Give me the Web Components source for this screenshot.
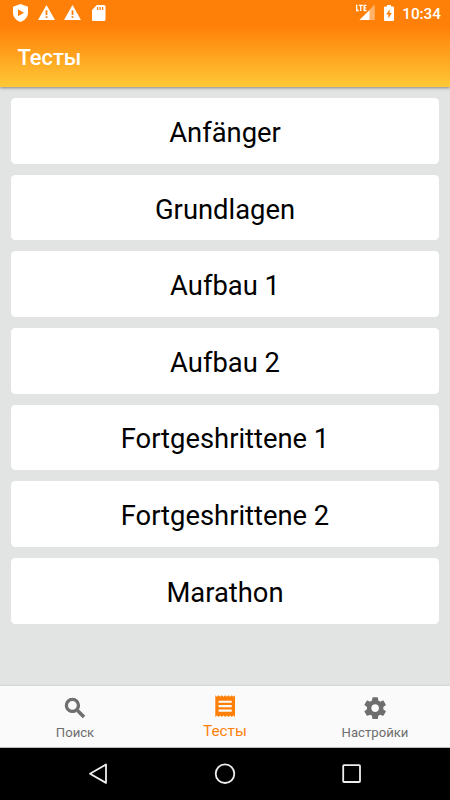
<!DOCTYPE html>
<html lang="ru">
<head>
<meta charset="utf-8">
<title>Тесты</title>
<style>
  html, body { margin: 0; height: 100%; }
  body {
    --dp: 1.09489px;
    font-family: Roboto, "Noto Sans", sans-serif;
    background: #e2e4e3;
    overflow: hidden;
  }
</style>
</head>
<body>
<app-screen>
  <status-bar slot="header" time="10:34"></status-bar>
  <title-bar slot="header">Тесты</title-bar>
  <test-card>Anfänger</test-card>
  <test-card>Grundlagen</test-card>
  <test-card>Aufbau 1</test-card>
  <test-card>Aufbau 2</test-card>
  <test-card>Fortgeshrittene 1</test-card>
  <test-card>Fortgeshrittene 2</test-card>
  <test-card>Marathon</test-card>
  <tab-bar slot="footer">
    <tab-item icon="search">Поиск</tab-item>
    <tab-item icon="receipt" active>Тесты</tab-item>
    <tab-item icon="settings">Настройки</tab-item>
  </tab-bar>
  <system-nav slot="footer"></system-nav>
</app-screen>

<script>
// AppScreen - header on top, scrolling list, footer at the bottom
class AppScreen extends HTMLElement {
  constructor() {
    super();
    this.attachShadow({ mode: 'open' }).innerHTML = `
      <style>
        :host { display: flex; flex-direction: column; height: 800px; }
        header {
          flex: none;
          position: relative;
          background: linear-gradient(#ff8008 calc(24 * var(--dp)), #ffc837);
          box-shadow: 0 1px 3px rgba(0, 0, 0, .42);
        }
        main {
          flex: 1;
          min-height: 0;
          display: flex;
          flex-direction: column;
          gap: calc(10 * var(--dp));
          padding: calc(10 * var(--dp));
        }
        footer { flex: none; }
      </style>
      <header><slot name="header"></slot></header>
      <main><slot></slot></main>
      <footer><slot name="footer"></slot></footer>`;
  }
}

// StatusBar - notification icons on the left, signal, battery and clock on the right
class StatusBar extends HTMLElement {
  constructor() {
    super();
    const warning = `
      <svg class="warning" width="17" height="15" viewBox="0 0 17 15">
        <path fill-rule="evenodd" d="M8.5 0 17 15H0zM7.600 5.200v4.800h1.800V5.200zM7.600 11.200v1.800h1.800v-1.800z"/>
      </svg>`;
    this.attachShadow({ mode: 'open' }).innerHTML = `
      <style>
        :host {
          display: flex;
          align-items: center;
          box-sizing: border-box;
          height: calc(24 * var(--dp) - .3px);
          padding: 0 9px 0 12.5px;
          color: #fff;
        }
        svg { display: block; fill: currentColor; flex: none; }
        .warning { margin-left: 9.5px; }
        .shield + .warning { margin-left: 10px; }
        .sd { margin-left: 11px; }
        .signal { margin-left: auto; }
        .battery { margin-left: 9px; }
        time { margin-left: 8px; font-size: 15.3px; font-weight: 500; line-height: 26px; padding-top: 2px; }
      </style>
      <svg class="shield" width="15" height="18" viewBox="0 0 15 18">
        <path fill-rule="evenodd" d="M7.5 0 15 2.800v6c0 4.200-3 7.700-7.500 9.200C3 16.500 0 13 0 8.800v-6zM5 5.200v7l6-3.500z"/>
      </svg>
      ${warning}
      ${warning}
      <svg class="sd" width="13.5" height="16" viewBox="0 0 13.5 16">
        <path fill-rule="evenodd" d="M4.900 0H12q1.500 0 1.500 1.500v13q0 1.500-1.500 1.500H1.500Q0 16 0 14.500V5zM5 2v3h1.300V2zM7.500 2v3h1.300V2zM10 2v3h1.300V2z"/>
      </svg>
      <svg class="signal" width="20" height="17" viewBox="0 0 20 17">
        <path d="M19.800.500V16H4.500z" opacity=".4"/>
        <path d="M14.500 6.300V16h-10z"/>
        <path fill="none" stroke="currentColor" stroke-width="1.300" d="M1.700.8v5.700h2.100M3.800 1.400h4M5.800 1v6M11.400 1.400H9.200v5.100h2.300M9.200 3.900h2"/>
      </svg>
      <svg class="battery" width="10" height="16" viewBox="0 0 10 16">
        <path fill-rule="evenodd" d="M3 0h4v1.500h2q1 0 1 1V15q0 1-1 1H1q-1 0-1-1V2.500q0-1 1-1h2zM5.600 4.200 2.200 9.600h2.200v3.900l3.400-5.400H5.600z"/>
      </svg>
      <time></time>`;
  }

  connectedCallback() {
    this.shadowRoot.querySelector('time').textContent = this.getAttribute('time');
  }
}

class TitleBar extends HTMLElement {
  constructor() {
    super();
    this.attachShadow({ mode: 'open' }).innerHTML = `
      <style>
        :host {
          display: flex;
          align-items: center;
          box-sizing: border-box;
          height: calc(56 * var(--dp) - .1px);
          padding: 2px 0 0 calc(16 * var(--dp));
          color: #fff;
          font-size: calc(20 * var(--dp));
          font-weight: 500;
        }
      </style>
      <slot></slot>`;
  }
}

class TestCard extends HTMLElement {
  constructor() {
    super();
    this.attachShadow({ mode: 'open' }).innerHTML = `
      <style>
        :host {
          flex: none;
          display: flex;
          align-items: center;
          justify-content: center;
          box-sizing: border-box;
          height: calc(60 * var(--dp));
          padding-top: 4px;
          border-radius: calc(4 * var(--dp));
          background: #fff;
          color: #000;
          font-size: calc(25 * var(--dp));
        }
      </style>
      <slot></slot>`;
  }
}

class TabBar extends HTMLElement {
  constructor() {
    super();
    this.attachShadow({ mode: 'open' }).innerHTML = `
      <style>
        :host {
          display: grid;
          grid-template-columns: repeat(3, 1fr);
          height: calc(56 * var(--dp));
          background: #fafafa;
          box-shadow: 0 0 2px rgba(0, 0, 0, .2);
        }
      </style>
      <slot></slot>`;
  }
}

const ICONS = {
  search: 'M15.500 14h-.790l-.280-.270C15.410 12.590 16 11.110 16 9.500 16 5.910 13.090 3 9.500 3S3 5.910 3 9.500 5.910 16 9.500 16c1.610 0 3.090-.590 4.230-1.570l.270.280v.790l5 4.990L20.490 19l-4.990-5zm-6 0C7.010 14 5 11.990 5 9.500S7.010 5 9.500 5 14 7.010 14 9.500 11.990 14 9.500 14z',
  receipt: 'M18 17H6v-2h12v2zm0-4H6v-2h12v2zm0-4H6V7h12v2zM3 22l1.500-1.500L6 22l1.500-1.500L9 22l1.500-1.500L12 22l1.500-1.500L15 22l1.500-1.500L18 22l1.500-1.500L21 22V2l-1.500 1.500L18 2l-1.500 1.500L15 2l-1.500 1.500L12 2l-1.500 1.500L9 2 7.500 3.500 6 2 4.500 3.500 3 2v20z',
  settings: 'M19.430 12.980c.04-.32.07-.64.07-.98s-.03-.66-.07-.98l2.110-1.650c.19-.15.24-.42.12-.64l-2-3.460c-.12-.22-.39-.3-.61-.22l-2.490 1c-.52-.4-1.080-.73-1.690-.98l-.38-2.650C14.460 2.180 14.250 2 14 2h-4c-.25 0-.46.18-.49.42l-.38 2.650c-.61.25-1.170.59-1.690.98l-2.490-1c-.23-.09-.49 0-.61.22l-2 3.460c-.13.22-.07.49.12.64l2.110 1.650c-.04.32-.07.65-.07.98s.03.66.07.98l-2.110 1.650c-.19.15-.24.42-.12.64l2 3.460c.12.22.39.3.61.22l2.490-1c.52.4 1.080.73 1.690.98l.38 2.650c.03.24.24.42.49.42h4c.25 0 .46-.18.49-.42l.38-2.650c.61-.25 1.170-.59 1.690-.98l2.490 1c.23.09.49 0 .61-.22l2-3.460c.12-.22.07-.49-.12-.64l-2.110-1.650zM12 15.500c-1.930 0-3.500-1.570-3.500-3.500s1.570-3.500 3.500-3.500 3.500 1.570 3.500 3.500-1.570 3.500-3.500 3.500z'
};

class TabItem extends HTMLElement {
  constructor() {
    super();
    this.attachShadow({ mode: 'open' }).innerHTML = `
      <style>
        :host {
          display: flex;
          flex-direction: column;
          align-items: center;
          box-sizing: border-box;
          padding-top: 8.5px;
          color: #6e6e6e;
          font-size: calc(12 * var(--dp));
          line-height: 18px;
        }
        :host([active]) {
          padding-top: 7px;
          color: #ff8008;
          font-size: calc(14 * var(--dp));
        }
        svg { width: 26.3px; height: 26.3px; fill: currentColor; margin-bottom: 3px; }
        :host([icon="search"]) path { stroke: currentColor; stroke-width: 1; }
      </style>
      <svg viewBox="0 0 24 24"><path/></svg>
      <span><slot></slot></span>`;
  }

  connectedCallback() {
    this.shadowRoot.querySelector('path').setAttribute('d', ICONS[this.getAttribute('icon')]);
  }
}

// SystemNav - back, home and recents
class SystemNav extends HTMLElement {
  constructor() {
    super();
    this.attachShadow({ mode: 'open' }).innerHTML = `
      <style>
        :host {
          display: flex;
          align-items: center;
          justify-content: center;
          gap: 104.5px;
          box-sizing: border-box;
          height: calc(48 * var(--dp));
          border-top: 1px solid #bbb;
          background: #000;
        }
        svg { width: 22px; height: 22px; fill: none; stroke: #eee; stroke-width: 1.8; stroke-linejoin: round; }
      </style>
      <svg viewBox="0 0 22 22"><path d="M18 1.500v18.400L2 10.700z"/></svg>
      <svg viewBox="0 0 22 22"><circle cx="11" cy="10.700" r="9.300"/></svg>
      <svg viewBox="0 0 22 22"><rect x="2.200" y="2.200" width="16.800" height="16.800" rx=".8"/></svg>`;
  }
}

customElements.define('app-screen', AppScreen);
customElements.define('status-bar', StatusBar);
customElements.define('title-bar', TitleBar);
customElements.define('test-card', TestCard);
customElements.define('tab-bar', TabBar);
customElements.define('tab-item', TabItem);
customElements.define('system-nav', SystemNav);
</script>
</body>
</html>
